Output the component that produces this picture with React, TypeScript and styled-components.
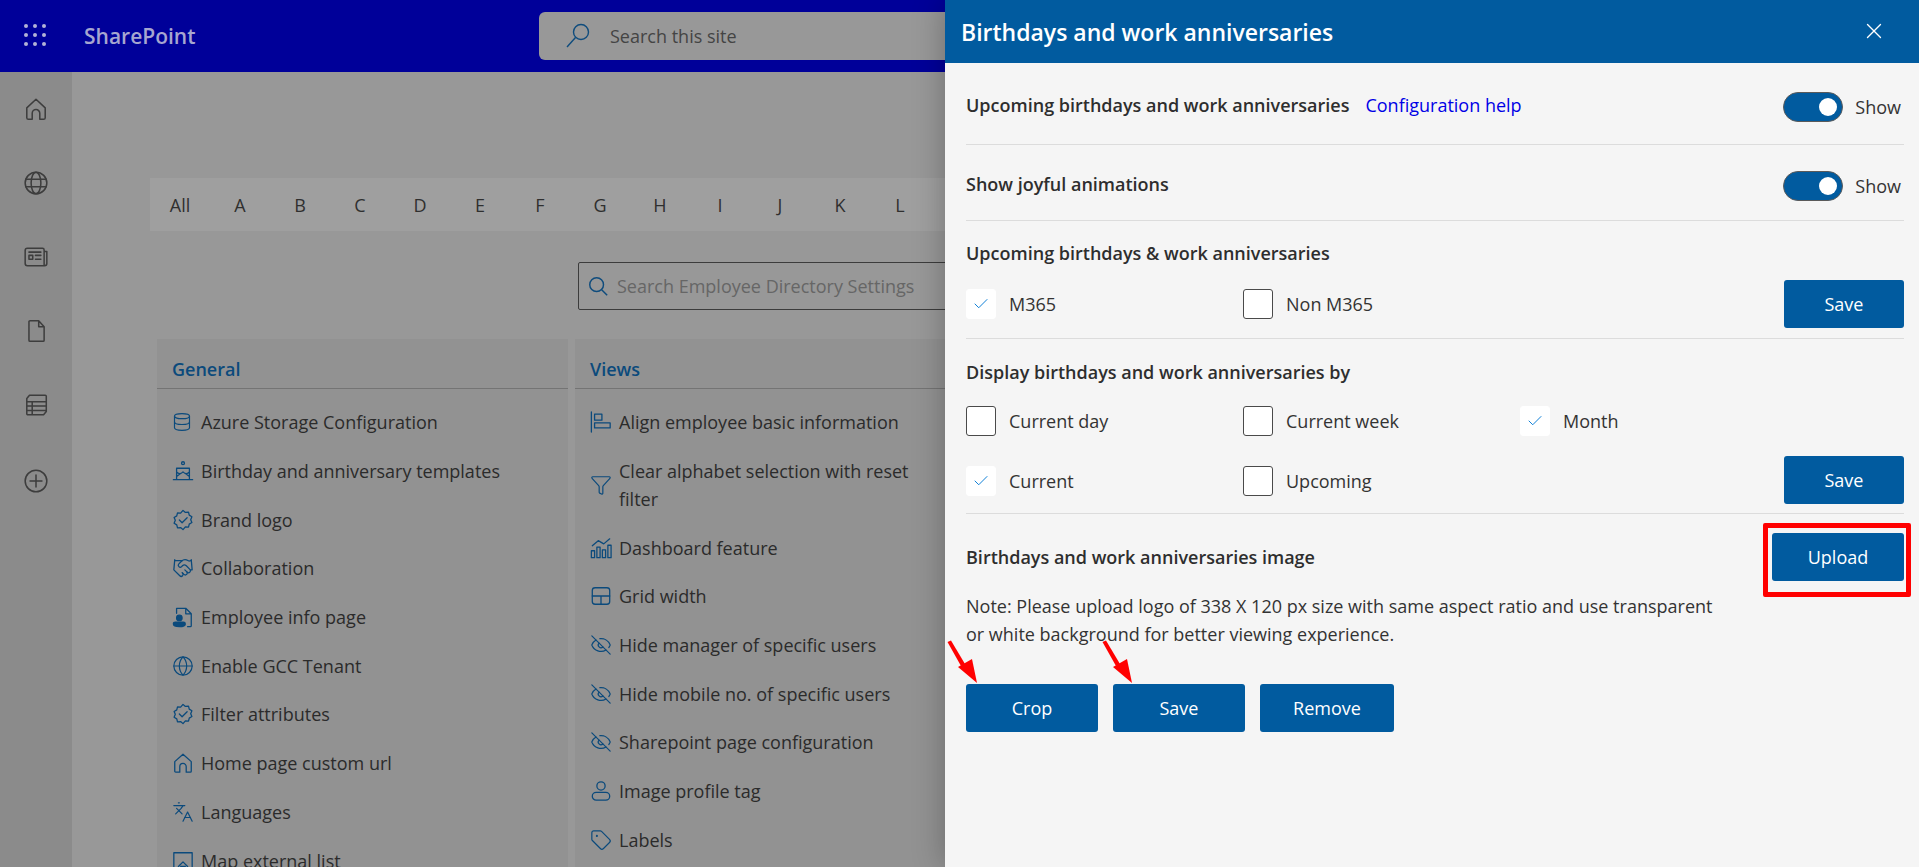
import { ReactNode } from 'react';
import styled, { createGlobalStyle } from 'styled-components';
import {
  Check,
  Database,
  EyeOff,
  Funnel,
  Globe,
  Handshake,
  Languages,
  Tag,
  X,
} from 'lucide-react';

const GlobalStyle = createGlobalStyle`
  html, body {
    margin: 0;
    padding: 0;
    width: 100%;
    height: 100%;
    overflow: hidden;
  }
  body {
    font-family: 'Open Sans', 'Noto Sans', Arial, sans-serif;
    font-size: 17px;
    color: #2b2b2b;
  }
`;

type IconProps = { children: ReactNode; size?: number };

function Ico({ children, size = 22 }: IconProps) {
  return (
    <svg
      width={size}
      height={size}
      viewBox="0 0 24 24"
      fill="none"
      stroke="currentColor"
      strokeWidth={1.4}
      strokeLinecap="round"
      strokeLinejoin="round"
    >
      {children}
    </svg>
  );
}

const Badge = () => (
  <Ico>
    <path d="M12 1.5l2.6 2.2 3.4-.3.8 3.3 2.9 1.8-1.3 3.1 1.3 3.1-2.9 1.8-.8 3.3-3.4-.3L12 22.5l-2.6-2.2-3.4.3-.8-3.3-2.9-1.8 1.3-3.1-1.3-3.1 2.9-1.8.8-3.3 3.4.3z" />
    <path d="M8 12l3 3 5.5-5.5" />
  </Ico>
);

const generalItems: { label: string; icon: ReactNode }[] = [
  { label: 'Azure Storage Configuration', icon: <Database size={20} strokeWidth={1.4} /> },
  {
    label: 'Birthday and anniversary templates',
    icon: (
      <Ico>
        <circle cx="12" cy="3.5" r="1.6" />
        <path d="M5 21V9h14v12M1.5 21.5h21M5 13c2 2.5 4.5 2.5 7 0 2.5 2.5 5 2.5 7 0M5 18l4-3M19 18l-4-3" />
      </Ico>
    ),
  },
  { label: 'Brand logo', icon: <Badge /> },
  { label: 'Collaboration', icon: <Handshake size={22} strokeWidth={1.4} /> },
  {
    label: 'Employee info page',
    icon: (
      <Ico>
        <path d="M5 8V2.5h10l6 6v13a1 1 0 0 1-1 1h-3M15 2.5v6h6" />
        <circle cx="8" cy="13" r="3" fill="currentColor" />
        <path d="M1.5 19.5a2 2 0 0 1 2-2h9a2 2 0 0 1 2 2c0 2-2 3-6.500 3s-6.500-1-6.500-3z" fill="currentColor" />
      </Ico>
    ),
  },
  { label: 'Enable GCC Tenant', icon: <Globe size={22} strokeWidth={1.3} /> },
  { label: 'Filter attributes', icon: <Badge /> },
  {
    label: 'Home page custom url',
    icon: (
      <Ico>
        <path d="M3 10.500L12 2.500l9 8V21a1 1 0 0 1-1 1h-4.500v-6a3.500 3.500 0 0 0-7 0v6H4a1 1 0 0 1-1-1z" />
      </Ico>
    ),
  },
  { label: 'Languages', icon: <Languages size={22} strokeWidth={1.3} /> },
  {
    label: 'Map external list',
    icon: (
      <Ico>
        <path d="M2 21V3h20v18M7 18l5-5 5 5M9.500 18h5" />
      </Ico>
    ),
  },
];

const viewItems: { label: string; icon: ReactNode }[] = [
  {
    label: 'Align employee basic information',
    icon: (
      <Ico>
        <path d="M1.500 1v22M5 3.500h8v6.500H5zM5 13h17v5.500H5z" />
      </Ico>
    ),
  },
  { label: 'Clear alphabet selection with reset filter', icon: <Funnel size={22} strokeWidth={1.3} /> },
  {
    label: 'Dashboard feature',
    icon: (
      <Ico>
        <path d="M1.500 15h3.500v7.500H1.500zM7.500 11H11v11.500H7.500zM13.500 14H17v8.500h-3.500zM19.500 9H23v13.500h-3.500zM2.500 9.500L9 4l6 3.500L21.500 2" />
      </Ico>
    ),
  },
  {
    label: 'Grid width',
    icon: (
      <Ico>
        <rect x="2.500" y="3" width="19" height="18" rx="3" />
        <path d="M2.500 12h19M12 12v9" />
      </Ico>
    ),
  },
  { label: 'Hide manager of specific users', icon: <EyeOff size={22} strokeWidth={1.3} /> },
  { label: 'Hide mobile no. of specific users', icon: <EyeOff size={22} strokeWidth={1.3} /> },
  { label: 'Sharepoint page configuration', icon: <EyeOff size={22} strokeWidth={1.3} /> },
  {
    label: 'Image profile tag',
    icon: (
      <Ico>
        <circle cx="12" cy="6.500" r="4.500" />
        <rect x="2.500" y="13.500" width="19" height="8.500" rx="4.250" />
      </Ico>
    ),
  },
  { label: 'Labels', icon: <Tag size={22} strokeWidth={1.3} /> },
];

const letters = ['All', 'A', 'B', 'C', 'D', 'E', 'F', 'G', 'H', 'I', 'J', 'K', 'L'];

function Switch() {
  return (
    <SwitchWrap>
      <SwitchTrack>
        <SwitchKnob />
      </SwitchTrack>
      <span>Show</span>
    </SwitchWrap>
  );
}

function CheckItem({ label, checked, width }: { label: string; checked?: boolean; width?: number }) {
  return (
    <CheckLabel $width={width}>
      <CheckBox $checked={checked}>{checked && <Check size={18} strokeWidth={1.25} />}</CheckBox>
      <span>{label}</span>
    </CheckLabel>
  );
}

function RedArrow({ left }: { left: number }) {
  return (
    <ArrowSvg $left={left} width="32" height="44" viewBox="0 0 32 44">
      <path d="M0.500 2L4 0.500 18 24 14 26z" fill="#ff0000" />
      <path d="M11 27L25 19 30 43z" fill="#ff0000" />
    </ArrowSvg>
  );
}

export default function App() {
  return (
    <Page>
      <GlobalStyle />
      <TopBar>
        <Waffle>
          {Array.from({ length: 9 }).map((_, i) => (
            <i key={i} />
          ))}
        </Waffle>
        <Brand>SharePoint</Brand>
        <SiteSearch>
          <svg width="28" height="28" viewBox="0 0 28 28" fill="none" stroke="#0f4c7d" strokeWidth="1.4">
            <circle cx="17" cy="10" r="7.500" />
            <path d="M11.500 15.500L3 25" />
          </svg>
          <span>Search this site</span>
        </SiteSearch>
      </TopBar>

      <Main>
        <Rail>
          <Ico size={26}>
            <path d="M3.500 11L12 3l8.500 8v9a1.500 1.500 0 0 1-1.500 1.500h-3.500V16a3.500 3.500 0 0 0-7 0v5.500H5A1.500 1.500 0 0 1 3.500 20z" />
          </Ico>
          <Ico size={26}>
            <circle cx="12" cy="12" r="10" />
            <ellipse cx="12" cy="12" rx="4.500" ry="10" />
            <path d="M2.500 8.500h19M2.500 15.500h19" />
          </Ico>
          <Ico size={26}>
            <path d="M4 4h14a1.500 1.500 0 0 1 1.500 1.500V20H4a2 2 0 0 1-2-2V6a2 2 0 0 1 2-2zM19.500 7H22v11a2 2 0 0 1-2 2h-.5" />
            <path d="M5.500 10.500h3.500v3.500H5.500zM11.500 10.500h5M11.500 14h5M5.500 7.500h11" />
          </Ico>
          <Ico size={26}>
            <path d="M6.500 2.500h8l5 5.500v12.500a1 1 0 0 1-1 1H6.500a1 1 0 0 1-1-1v-17a1 1 0 0 1 1-1zM14.500 2.500V8h5" />
          </Ico>
          <Ico size={26}>
            <path d="M3.500 6L6 3h14.500a1 1 0 0 1 1 1v14L19 21H4.500a1 1 0 0 1-1-1zM3.500 9h18M3.500 13h18M3.500 17h18M8.500 9v12" />
          </Ico>
          <PlusSlot>
            <Ico size={26}>
              <circle cx="12" cy="12" r="10" />
              <path d="M12 6.500v11M6.500 12h11" />
            </Ico>
          </PlusSlot>
        </Rail>

        <Content>
          <AlphaBar>
            {letters.map((l) => (
              <AlphaLetter key={l}>{l}</AlphaLetter>
            ))}
          </AlphaBar>

          <SettingsSearch>
            <svg width="22" height="22" viewBox="0 0 24 24" fill="none" stroke="#0f4c7d" strokeWidth="1.6">
              <circle cx="10.500" cy="10.500" r="7.500" />
              <path d="M16 16l6 6" />
            </svg>
            <span>Search Employee Directory Settings</span>
          </SettingsSearch>

          <Cards>
            <Card>
              <CardTitle>General</CardTitle>
              <CardList>
                {generalItems.map((item) => (
                  <CardRow key={item.label}>
                    <RowIcon>{item.icon}</RowIcon>
                    <span>{item.label}</span>
                  </CardRow>
                ))}
              </CardList>
            </Card>
            <Card>
              <CardTitle>Views</CardTitle>
              <CardList>
                {viewItems.map((item) => (
                  <CardRow key={item.label}>
                    <RowIcon>{item.icon}</RowIcon>
                    <span>{item.label}</span>
                  </CardRow>
                ))}
              </CardList>
            </Card>
          </Cards>
        </Content>
      </Main>

      <Panel>
        <PanelHeader>
          <PanelTitle>Birthdays and work anniversaries</PanelTitle>
          <CloseButton>
            <X size={26} strokeWidth={1.25} />
          </CloseButton>
        </PanelHeader>
        <PanelBody>
          <ToggleRow $top={28} $bottom={22}>
            <HeadingGroup>
              <Heading>Upcoming birthdays and work anniversaries</Heading>
              <HelpLink>Configuration help</HelpLink>
            </HeadingGroup>
            <Switch />
          </ToggleRow>

          <ToggleRow $top={25} $bottom={19}>
            <Heading>Show joyful animations</Heading>
            <Switch />
          </ToggleRow>

          <Section $top={18} $bottom={10}>
            <Heading>Upcoming birthdays &amp; work anniversaries</Heading>
            <OptionRow $gap={13}>
              <CheckGroup $top={9}>
                <CheckItem label="M365" checked />
                <CheckItem label="Non M365" />
              </CheckGroup>
              <ActionButton>Save</ActionButton>
            </OptionRow>
          </Section>

          <Section $top={19} $bottom={9}>
            <Heading>Display birthdays and work anniversaries by</Heading>
            <OptionRow $gap={20}>
              <CheckGroup>
                <CheckItem label="Current day" />
                <CheckItem label="Current week" />
                <CheckItem label="Month" checked />
              </CheckGroup>
            </OptionRow>
            <OptionRow $gap={20}>
              <CheckGroup $top={10}>
                <CheckItem label="Current" checked />
                <CheckItem label="Upcoming" />
              </CheckGroup>
              <ActionButton>Save</ActionButton>
            </OptionRow>
          </Section>

          <ImageSection>
            <UploadRow>
              <Heading>Birthdays and work anniversaries image</Heading>
              <UploadSlot>
                <ActionButton $width={132}>Upload</ActionButton>
                <RedFrame />
              </UploadSlot>
            </UploadRow>
            <Note>
              Note: Please upload logo of 338 X 120 px size with same aspect ratio and use
              transparent or white background for better viewing experience.
            </Note>
            <ButtonRow>
              <ButtonSlot>
                <ActionButton $width={132}>Crop</ActionButton>
                <RedArrow left={-19} />
              </ButtonSlot>
              <ButtonSlot>
                <ActionButton $width={132}>Save</ActionButton>
                <RedArrow left={-11} />
              </ButtonSlot>
              <ButtonSlot>
                <ActionButton $width={134}>Remove</ActionButton>
              </ButtonSlot>
            </ButtonRow>
          </ImageSection>
        </PanelBody>
      </Panel>
    </Page>
  );
}

const Page = styled.div`
  position: relative;
  width: 1919px;
  height: 867px;
  overflow: hidden;
  background: #989898;
`;

const TopBar = styled.header`
  display: flex;
  align-items: center;
  height: 72px;
  padding-left: 24px;
  background: #000099;
  box-sizing: border-box;
`;

const Waffle = styled.div`
  display: grid;
  grid-template-columns: repeat(3, 4px);
  grid-auto-rows: 4px;
  gap: 5px;
  width: 24px;
  margin: -2px 36px 0 0;

  i {
    border-radius: 50%;
    background: #b3b3d6;
  }
`;

const Brand = styled.div`
  width: 455px;
  font-size: 21px;
  font-weight: 600;
  color: #a6a6d0;
`;

const SiteSearch = styled.div`
  display: flex;
  align-items: center;
  gap: 18px;
  width: 500px;
  height: 48px;
  padding-left: 25px;
  box-sizing: border-box;
  border-radius: 6px;
  background: #989898;
  color: #444;
  font-size: 18px;
`;

const Main = styled.div`
  display: flex;
  height: 795px;
`;

const Rail = styled.nav`
  display: flex;
  flex-direction: column;
  align-items: center;
  gap: 48px;
  flex: 0 0 72px;
  padding-top: 24px;
  box-sizing: border-box;
  background: #8b8b8b;
  color: #3d3d3d;
`;

const PlusSlot = styled.div`
  margin-top: 2px;
`;

const Content = styled.main`
  flex: 1;
  min-width: 0;
  padding: 106px 0 0 78px;
`;

const AlphaBar = styled.div`
  display: flex;
  align-items: center;
  height: 53px;
  background: #9f9f9f;
  color: #2f2f2f;
  font-size: 18px;
`;

const AlphaLetter = styled.span`
  flex: 0 0 60px;
  text-align: center;
`;

const SettingsSearch = styled.div`
  display: flex;
  align-items: center;
  gap: 8px;
  width: 500px;
  height: 48px;
  margin: 31px 0 0 428px;
  padding-left: 8px;
  box-sizing: border-box;
  border: 1px solid #3c3c3c;
  border-radius: 2px;
  color: #666;
  font-size: 18px;
  white-space: nowrap;
`;

const Cards = styled.div`
  display: grid;
  grid-template-columns: 411px 385px;
  gap: 7px;
  margin: 29px 0 0 7px;
`;

const Card = styled.section`
  background: #929292;
  padding-bottom: 40px;
`;

const CardTitle = styled.h3`
  height: 50px;
  margin: 0;
  padding: 16px 0 0 15px;
  box-sizing: border-box;
  border-bottom: 1px solid #747474;
  font-size: 18px;
  line-height: 28px;
  font-weight: 600;
  color: #0b4a7c;
`;

const CardList = styled.div`
  padding: 9px 15px 0;
`;

const CardRow = styled.div`
  display: flex;
  align-items: center;
  gap: 7px;
  padding: 10.35px 0;
  font-size: 18px;
  line-height: 28px;
  color: #2b2b2b;
`;

const RowIcon = styled.span`
  display: flex;
  flex: 0 0 22px;
  color: #0b4a7c;
`;

const Panel = styled.aside`
  position: absolute;
  top: 0;
  right: 0;
  bottom: 0;
  width: 974px;
  background: #f5f5f5;
  box-shadow: 0 0 30px rgba(0, 0, 0, 0.28);
`;

const PanelHeader = styled.div`
  display: flex;
  align-items: center;
  justify-content: space-between;
  height: 63px;
  padding: 0 32px 0 16px;
  box-sizing: border-box;
  background: #015b9f;
  color: #fff;
`;

const PanelTitle = styled.h2`
  margin: 0;
  font-size: 23px;
  font-weight: 600;
`;

const CloseButton = styled.span`
  display: flex;
  margin-top: -2px;
`;

const PanelBody = styled.div`
  padding: 0 15px 0 21px;
`;

const ToggleRow = styled.div<{ $top: number; $bottom: number }>`
  display: flex;
  justify-content: space-between;
  align-items: flex-start;
  padding: ${(p) => p.$top}px 0 ${(p) => p.$bottom}px;
  border-bottom: 1px solid #dcdcdc;
`;

const HeadingGroup = styled.div`
  display: flex;
  gap: 16px;
`;

const Heading = styled.div`
  font-size: 18px;
  line-height: 28px;
  font-weight: 600;
  color: #2e2e2e;
`;

const HelpLink = styled.a`
  font-size: 18px;
  line-height: 28px;
  color: #0000e6;
`;

const SwitchWrap = styled.div`
  display: flex;
  align-items: center;
  gap: 12px;
  margin: 1px 3px 0 0;
  font-size: 18px;
  line-height: 30px;
  color: #333;
`;

const SwitchTrack = styled.div`
  display: flex;
  align-items: center;
  justify-content: flex-end;
  width: 60px;
  height: 30px;
  padding-right: 5px;
  box-sizing: border-box;
  border: 1px solid #5a5a5a;
  border-radius: 15px;
  background: #015b9f;
`;

const SwitchKnob = styled.div`
  width: 18px;
  height: 18px;
  border-radius: 50%;
  background: #fff;
`;

const Section = styled.div<{ $top: number; $bottom: number }>`
  padding: ${(p) => p.$top}px 0 ${(p) => p.$bottom}px;
  border-bottom: 1px solid #dcdcdc;
`;

const OptionRow = styled.div<{ $gap: number }>`
  display: flex;
  justify-content: space-between;
  align-items: flex-start;
  margin-top: ${(p) => p.$gap}px;
`;

const CheckGroup = styled.div<{ $top?: number }>`
  display: flex;
  padding-top: ${(p) => p.$top ?? 0}px;
`;

const CheckLabel = styled.label<{ $width?: number }>`
  display: flex;
  align-items: center;
  gap: 13px;
  width: ${(p) => p.$width ?? 277}px;
  font-size: 18px;
  line-height: 30px;
  color: #333;
`;

const CheckBox = styled.span<{ $checked?: boolean }>`
  display: flex;
  align-items: center;
  justify-content: center;
  width: 30px;
  height: 30px;
  box-sizing: border-box;
  border: 1px solid ${(p) => (p.$checked ? '#fff' : '#4a4a4a')};
  border-radius: 3px;
  background: #fff;
  color: #0078d4;
`;

const ActionButton = styled.button<{ $width?: number }>`
  display: block;
  width: ${(p) => p.$width ?? 120}px;
  height: 48px;
  padding: 0;
  border: 0;
  border-radius: 3px;
  background: #015b9f;
  color: #fff;
  font-family: inherit;
  font-size: 18px;
`;

const ImageSection = styled.div`
  padding-top: 19px;
`;

const UploadRow = styled.div`
  display: flex;
  justify-content: space-between;
  align-items: center;
`;

const UploadSlot = styled.div`
  position: relative;
`;

const RedFrame = styled.div`
  position: absolute;
  top: -10px;
  left: -9px;
  right: -7px;
  bottom: -16px;
  border: 5px solid #ff0000;
  border-radius: 2px;
  pointer-events: none;
`;

const Note = styled.p`
  width: 760px;
  margin: 11px 0 0;
  font-size: 18px;
  line-height: 28px;
  color: #333;
`;

const ButtonRow = styled.div`
  display: flex;
  gap: 15px;
  margin-top: 36px;
`;

const ButtonSlot = styled.div`
  position: relative;
`;

const ArrowSvg = styled.svg<{ $left: number }>`
  position: absolute;
  top: -44px;
  left: ${(p) => p.$left}px;
`;
